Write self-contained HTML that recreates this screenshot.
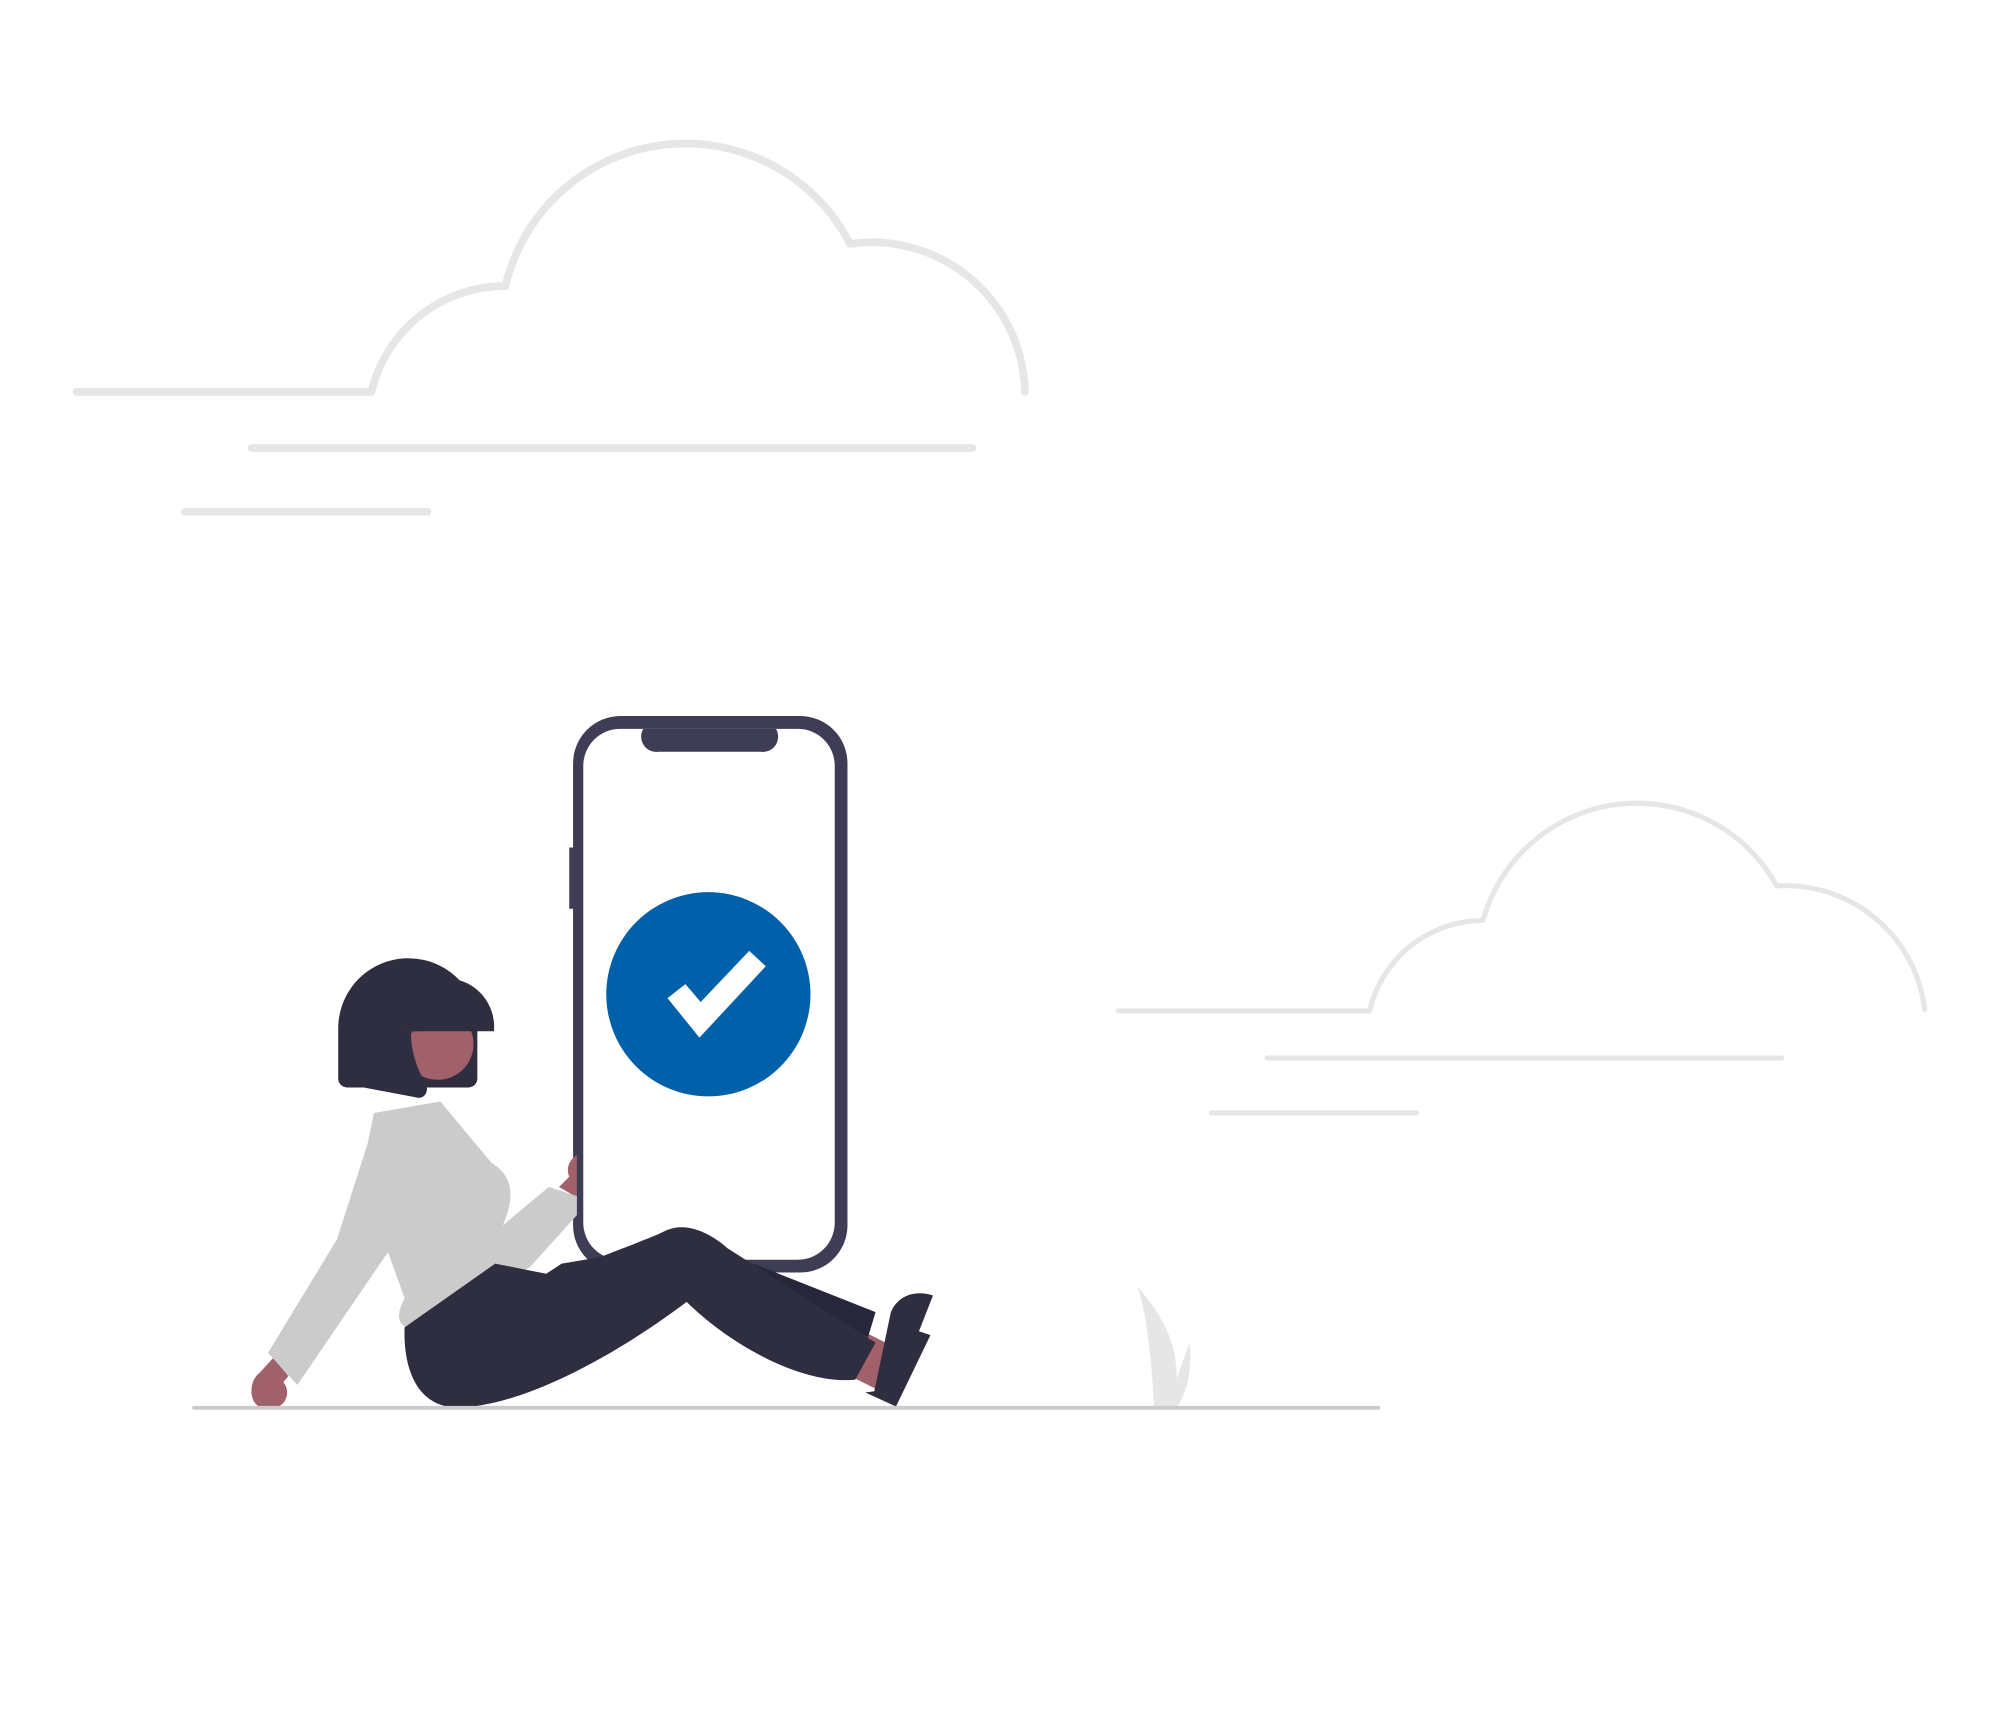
<!DOCTYPE html>
<html><head><meta charset="utf-8"><style>html,body{margin:0;padding:0;background:#fff;}svg{display:block}</style></head>
<body>
<svg width="2000" height="1718" viewBox="0 0 1567 1346" xmlns="http://www.w3.org/2000/svg">
<defs><clipPath id="fc"><rect x="300" y="808" width="100" height="60"/></clipPath></defs>
<g fill="none" stroke="#e6e6e6" stroke-linecap="round" stroke-linejoin="round">
<path d="M60 307 H291 A108 108 0 0 1 396 224 A145 145 0 0 1 666 191 A120 120 0 0 1 803 307" stroke-width="6"/>
<path d="M197 351 H762 M145 401 H335" stroke-width="6"/>
<path d="M876 792 H1073 A92 92 0 0 1 1162 721 A125 125 0 0 1 1392 694 A110 110 0 0 1 1508 791" stroke-width="4"/>
<path d="M993 829 H1396 M949 872 H1110" stroke-width="4"/>
</g>
<path d="M891 1008 C920 1040 922 1065 922 1080 L932 1052 C934 1075 930 1090 922 1103 H904 C903 1070 898 1025 891 1008Z" fill="#e6e6e6"/>
<rect x="446" y="664" width="12" height="48" fill="#3f3d56"/>
<rect x="449" y="561" width="215" height="436" rx="37" fill="#3f3d56"/>
<rect x="457" y="571" width="197" height="416" rx="29" fill="#fff"/>
<path d="M504 571 H608 A12 12 0 0 1 596 589 H516 A12 12 0 0 1 504 571Z" fill="#3f3d56"/>
<circle cx="555" cy="779" r="80" fill="#0061aa"/>
<polygon points="523,782 537,771 549,785 587,745 600,757 548,813" fill="#fff"/>
<path d="M203 1076 L214 1064 L226 1078 L222 1083 C228 1090 224 1100 218 1102 H203 C195 1098 195 1082 203 1076Z" fill="#a0616a"/>
<path d="M680 1045 L700 1055 L690 1090 L670 1080Z" fill="#a0616a"/>
<path d="M438 930 L446 922 C443 914 447 908 452 905 L452 938Z" fill="#a0616a"/>
<path d="M293 872 L345 863 L385 911 C400 920 405 935 394 960 L430 930 L452 937 L452 952 L415 993 L318 1040 C310 1035 312 1027 317 1017 L304 981 L233 1085 L210 1060 L264 971 L288 896Z" fill="#cbcbcb"/>
<path d="M590 990 L686 1028 L680 1048 L600 1005Z" fill="#27263a"/>
<path d="M317 1040 L388 990 L428 998 L440 990 L470 985 C490 977 510 970 522 964 C545 954 570 978 570 978 L686 1052 L670 1081 C625 1085 568 1050 538 1020 C497 1051 420 1100 360 1103 C322 1103 316 1064 317 1040Z" fill="#2f2e41"/>
<path d="M685 1090 L698 1028 C703 1016 716 1010 731 1015 L720 1043 L729 1046 L702 1102 L678 1091Z" fill="#2f2e41"/>
<path d="M265 845 V804 A55 55 0 0 1 360 768 A38 38 0 0 1 387 808 H374 V845 A7 7 0 0 1 367 852 H300 L285 852 H272 A7 7 0 0 1 265 845Z" fill="#2f2e41"/>
<circle cx="343" cy="818" r="28" fill="#a0616a" clip-path="url(#fc)"/>
<path d="M300 808 H330 L328 800 L322 810 C322 825 328 840 334 850 C336 856 332 861 327 860 L285 852 L300 808Z" fill="#2f2e41"/>
<line x1="152" y1="1103" x2="1080" y2="1103" stroke="#cbcbcb" stroke-width="3" stroke-linecap="round"/>
</svg>
</body></html>
